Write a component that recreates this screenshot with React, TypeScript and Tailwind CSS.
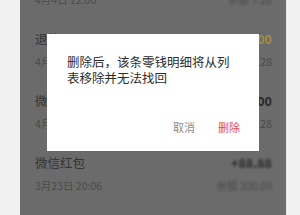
import React from 'react';

type Row = {
  title: string;
  date: string;
  amount: string;
  balance: string;
  amountClass: string;
  blurAmount?: boolean;
  blurBalance?: boolean;
};

const rows: Row[] = [
  { title: '零钱提现', date: '4月4日 12:00', amount: '-50.00', balance: '余额 7.28', amountClass: 'text-[#2e2e2e]', blurAmount: true, blurBalance: true },
  { title: '退款', date: '4月2日 18:31', amount: '+50.00', balance: '余额 57.28', amountClass: 'text-[#a08f3e]' },
  { title: '微信转账', date: '4月1日 09:12', amount: '-20.00', balance: '余额 7.28', amountClass: 'text-[#262626]' },
  { title: '微信红包', date: '3月23日 20:06', amount: '+88.88', balance: '余额 300.00', amountClass: 'text-[#2a2a2a]', blurAmount: true, blurBalance: true },
];

const font = { fontFamily: '"Noto Sans CJK SC", "Noto Sans", sans-serif' };

export default function App() {
  return (
    <div className="flex w-[300px] h-[215px] overflow-hidden bg-[#f1f1f1]" style={font}>
      <div className="w-[20px] shrink-0 bg-[#f1f1f1]" />

      {/* dimmed phone page */}
      <div className="relative w-[266px] shrink-0 overflow-hidden bg-[#6b6b6b]">
        <ul className="-mt-[44px]">
          {rows.map((r, i) => (
            <li key={i} className="flex justify-between pl-[15px] pr-[14px] pt-[12px] pb-[11px]">
              <div className="flex flex-col">
                <span className="text-[12.5px] leading-[18px] text-[#333333]">{r.title}</span>
                <span className="mt-[7px] text-[10.5px] leading-[14px] text-[#4a4a4a]">{r.date}</span>
              </div>
              <div className="flex flex-col items-end">
                <span className={`text-[12.5px] leading-[18px] font-semibold ${r.amountClass} ${r.blurAmount ? 'blur-[1px]' : ''}`}>
                  {r.amount}
                </span>
                <span className={`mt-[7px] text-[10.5px] leading-[14px] text-[#4a4a4a] ${r.blurBalance ? 'blur-[1px]' : ''}`}>
                  {r.balance}
                </span>
              </div>
            </li>
          ))}
        </ul>

        {/* confirm dialog */}
        <div className="absolute left-[27px] top-[34px] flex h-[117px] w-[212px] flex-col justify-between bg-white pb-[16px] pt-[20px]">
          <p className="px-5 text-[12.5px] leading-[16px] text-[#2b2b2b]">
            删除后，该条零钱明细将从列表移除并无法找回
          </p>
          <div className="flex justify-end gap-[23px] pr-[19px] text-[11px] leading-[16px]">
            <button className="text-[#8a8a8a]">取消</button>
            <button className="text-[#e25050]">删除</button>
          </div>
        </div>
      </div>

      <div className="flex-1 border-l border-[#e6e6e6] bg-[#f1f1f1]" />
    </div>
  );
}
